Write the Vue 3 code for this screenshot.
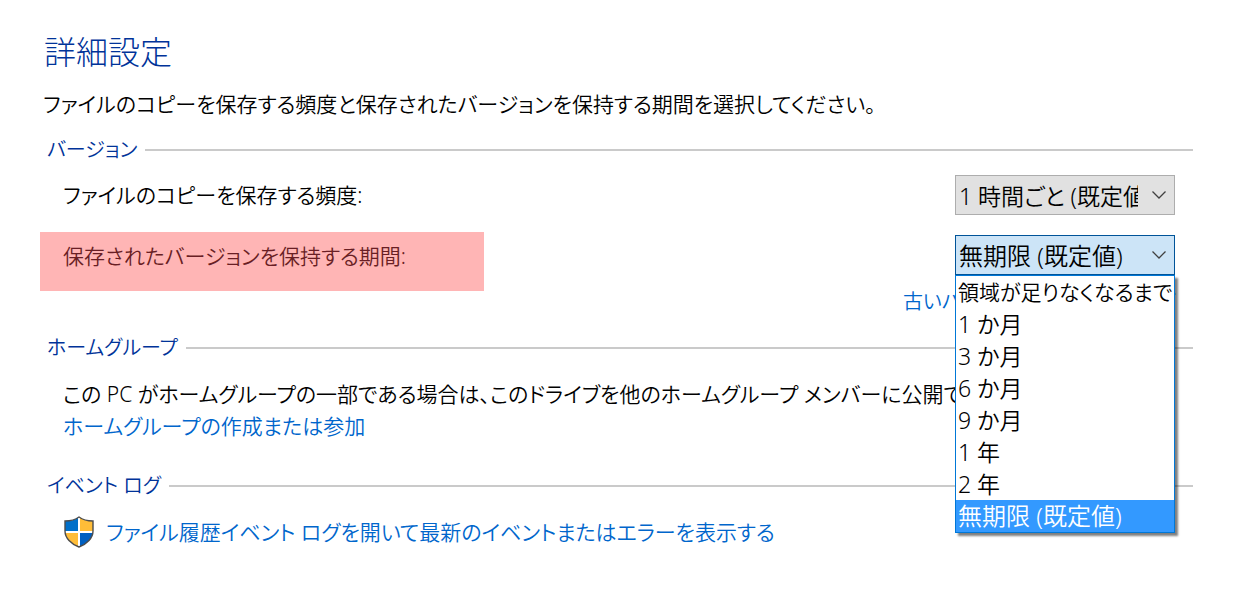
<script setup>
import { ref } from "vue";

const frequency = ref("1 時間ごと (既定値)");
const retention = ref("無期限 (既定値)");
const open = ref(true);

const frequencies = ["10 分ごと", "30 分ごと", "1 時間ごと (既定値)", "毎日"];

const periods = [
  "領域が足りなくなるまで",
  "1 か月",
  "3 か月",
  "6 か月",
  "9 か月",
  "1 年",
  "2 年",
  "無期限 (既定値)",
];

const toggle = () => {
  open.value = !open.value;
};

const choose = (period) => {
  retention.value = period;
  open.value = false;
};
</script>

<template>
  <main class="settings">
    <h1>詳細設定</h1>
    <p class="intro">ファイルのコピーを保存する頻度と保存されたバージョンを保持する期間を選択してください。</p>

    <section class="versions">
      <h2>バージョン</h2>
      <div class="row">
        <label for="frequency">ファイルのコピーを保存する頻度:</label>
        <div class="field">
          <select id="frequency" v-model="frequency">
            <option v-for="item in frequencies" :key="item">{{ item }}</option>
          </select>
          <svg class="chevron" viewBox="0 0 14 8"><path d="M0.5 0.5 7 7 13.5 0.5" /></svg>
        </div>
      </div>
      <div class="row marked">
        <label for="retention">保存されたバージョンを保持する期間:</label>
        <div class="field">
          <select id="retention" v-model="retention" class="active" @mousedown.prevent="toggle">
            <option v-for="item in periods" :key="item">{{ item }}</option>
          </select>
          <svg class="chevron" viewBox="0 0 14 8"><path d="M0.5 0.5 7 7 13.5 0.5" /></svg>
          <ul v-if="open" class="menu" role="listbox">
            <li
              v-for="item in periods"
              :key="item"
              role="option"
              :aria-selected="item === retention"
              :class="{ selected: item === retention, long: item.length > 10 }"
              @click="choose(item)"
            >
              {{ item }}
            </li>
          </ul>
        </div>
      </div>
      <a href="#" class="cleanup">古いバージョンのクリーンアップ</a>
    </section>

    <section class="homegroup">
      <h2>ホームグループ</h2>
      <div class="content">
        <p>この PC がホームグループの一部である場合は、このドライブを他のホームグループ メンバーに公開できます。</p>
        <a href="#">ホームグループの作成または参加</a>
      </div>
    </section>

    <section class="events">
      <h2>イベント ログ</h2>
      <div class="content log">
        <svg class="shield" viewBox="0 0 30 32">
          <defs>
            <clipPath id="shield-shape">
              <path d="M15 1C11 4 6 5 1 5V15C1 22 7 28 15 31C23 28 29 22 29 15V5C24 5 19 4 15 1Z" />
            </clipPath>
          </defs>
          <g clip-path="url(#shield-shape)">
            <rect width="30" height="32" fill="#fff" />
            <path fill="#006fc9" d="M0 0H14V15H0Z" />
            <path fill="#ffbd38" d="M16 0H30V15H16ZM0 17H14V32H0Z" />
            <path fill="#005fc0" d="M16 17H30V32H16Z" />
          </g>
          <path
            fill="none"
            stroke="#4c4c4c"
            stroke-width="1.4"
            d="M15 1C11 4 6 5 1 5V15C1 22 7 28 15 31C23 28 29 22 29 15V5C24 5 19 4 15 1Z"
          />
        </svg>
        <a href="#">ファイル履歴イベント ログを開いて最新のイベントまたはエラーを表示する</a>
      </div>
    </section>
  </main>
</template>

<style>
body {
  margin: 0;
  background: #fff;
}
</style>

<style scoped>
.settings {
  padding: 32px 42px 64px 40px;
  color: #000;
  font-family: "Noto Sans", "Noto Sans CJK JP", sans-serif;
  font-size: 21px;
  font-weight: 350;
  line-height: 32px;
  font-feature-settings: "palt";
  white-space: nowrap;
}

h1,
h2,
p,
ul {
  margin: 0;
  padding: 0;
  font-weight: inherit;
}

h1 {
  padding-left: 4px;
  color: #003399;
  font-size: 32px;
  font-weight: 300;
  line-height: 40px;
}

.intro {
  margin: 16px 0 14px;
  padding-left: 3px;
}

h2 {
  display: flex;
  align-items: center;
  gap: 8px;
  padding-left: 7px;
  color: #003399;
  font-size: 20px;
}

h2::after {
  content: "";
  flex: 1;
  height: 2px;
  background: #cacaca;
}

a {
  color: #0066cc;
  text-decoration: none;
}

.versions {
  display: flex;
  flex-direction: column;
}

.row {
  display: flex;
  align-items: center;
  justify-content: space-between;
  margin-top: 9px;
  padding-right: 18px;
}

.row label {
  padding-left: 23px;
}

.marked {
  align-items: flex-start;
  margin-top: 17px;
}

.marked label {
  box-sizing: border-box;
  width: 444px;
  height: 59px;
  padding-top: 8px;
  background: #ffb5b5;
  color: #691e24;
}

.field {
  position: relative;
  width: 220px;
  font-size: 23px;
}

.marked .field {
  padding-top: 3px;
}

select {
  display: block;
  box-sizing: border-box;
  width: 100%;
  height: 40px;
  padding: 1px 36px 0 3px;
  border: 1px solid #adadad;
  border-radius: 0;
  outline: none;
  appearance: none;
  background: #e1e1e1;
  color: #000;
  font: inherit;
  font-feature-settings: inherit;
}

select.active {
  border-color: #005499;
  background: #cce4f7;
  font-size: 24px;
}

.chevron {
  position: absolute;
  right: 9px;
  bottom: 16px;
  width: 14px;
  height: 8px;
  fill: none;
  stroke: #404040;
  stroke-width: 1.3;
  pointer-events: none;
}

.menu {
  position: absolute;
  top: 100%;
  left: 0;
  z-index: 1;
  box-sizing: border-box;
  width: 100%;
  border: 1px solid #0078d7;
  background: #fff;
  box-shadow: 3px 3px 2px rgba(0, 0, 0, 0.5);
  list-style: none;
}

.menu li {
  padding-left: 2px;
}

.menu .long {
  font-size: 21px;
}

.menu .selected {
  background: #3399ff;
  color: #fff;
  font-size: 24px;
}

.cleanup {
  align-self: flex-end;
  margin-right: 18px;
  font-size: 20px;
  line-height: 22px;
}

.homegroup {
  margin-top: 19px;
}

.content {
  padding: 14px 0 0 23px;
}

.events {
  margin-top: 28px;
}

.log {
  display: flex;
  align-items: center;
  gap: 12px;
  padding-left: 24px;
}

.shield {
  width: 30px;
  height: 32px;
}
</style>
